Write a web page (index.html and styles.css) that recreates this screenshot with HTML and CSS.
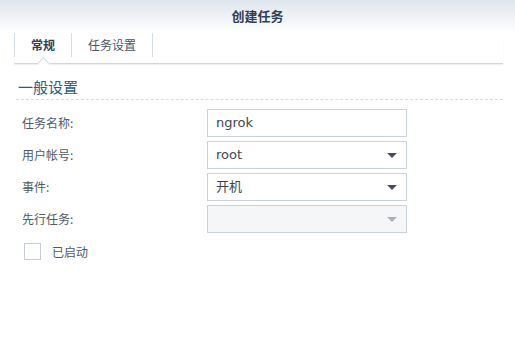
FILE: index.html
```html
<!DOCTYPE html>
<html lang="zh">
<head>
    <meta charset="UTF-8">
    <meta name="viewport" content="width=device-width, initial-scale=1.0">
    <title>创建任务</title>
    <link rel="stylesheet" href="styles.css">
</head>
<body>
    <div class="header">创建任务</div>
    <div class="tabs">
        <div class="tab active">常规</div>
        <div class="tab">任务设置</div>
    </div>
    <div class="content">
        <div class="section-title">一般设置</div>
        <div class="form">
            <label class="label">任务名称:</label>
            <div class="field">ngrok</div>

            <label class="label">用户帐号:</label>
            <div class="field select">root<span class="arrow"></span></div>

            <label class="label">事件:</label>
            <div class="field select">开机<span class="arrow"></span></div>

            <label class="label">先行任务:</label>
            <div class="field select disabled"><span class="arrow"></span></div>
        </div>
        <div class="check-row">
            <span class="checkbox"></span>
            <span class="check-label">已启动</span>
        </div>
    </div>
</body>
</html>
```

FILE: styles.css
```css
* {
    box-sizing: border-box;
}
body {
    margin: 0;
    background-color: #ffffff;
    font-family: "DejaVu Sans", "Noto Sans CJK SC", sans-serif;
    font-size: 12px;
    color: #505a64;
}
.header {
    height: 33px;
    line-height: 32px;
    text-align: center;
    font-size: 13px;
    font-weight: bold;
    color: #2f3f55;
    font-family: "Noto Sans CJK SC", sans-serif;
    background: linear-gradient(to bottom, #dfe5ed, #ffffff);
}
.tabs {
    display: flex;
    margin: 0 12px 0 14px;
    height: 31px;
    border-bottom: 1px solid #d4d8dc;
    box-shadow: 0 1px 1px rgba(0, 0, 0, 0.06);
}
.tab {
    position: relative;
    height: 24px;
    line-height: 24px;
    padding: 0 16px;
    border-right: 1px solid #d5dde6;
    font-family: "Noto Sans CJK SC", sans-serif;
    color: #4a5566;
}
.tab:first-child {
    border-left: 1px solid #d5dde6;
}
.tab.active {
    font-weight: bold;
    color: #2f3f55;
}
.tab.active::after {
    content: "";
    position: absolute;
    left: 50%;
    bottom: -11px;
    width: 8px;
    height: 8px;
    margin-left: -4px;
    background-color: #ffffff;
    border-top: 1px solid #d4d8dc;
    border-left: 1px solid #d4d8dc;
    transform: rotate(45deg);
}
.content {
    padding: 0 12px 0 16px;
}
.section-title {
    margin: 14px 0 0 0;
    padding: 0 0 3px 2px;
    font-size: 15px;
    line-height: 18px;
    color: #2a5a8e;
    font-family: "Noto Sans CJK SC", sans-serif;
    border-bottom: 1px dashed #d2dbe6;
}
.form {
    display: grid;
    grid-template-columns: 185px 200px;
    row-gap: 4px;
    margin-top: 9px;
    padding-left: 6px;
}
.label {
    line-height: 28px;
    font-family: "Noto Sans CJK SC", sans-serif;
    color: #505a64;
}
.field {
    position: relative;
    height: 28px;
    line-height: 26px;
    padding: 0 8px;
    border: 1px solid #c9d2dc;
    font-size: 13px;
    color: #3e4650;
    font-family: "DejaVu Sans", "Noto Sans CJK SC", sans-serif;
}
.field.disabled {
    background-color: #f4f6f8;
}
.arrow {
    position: absolute;
    right: 9px;
    top: 11px;
    width: 0;
    height: 0;
    border-left: 5px solid transparent;
    border-right: 5px solid transparent;
    border-top: 5px solid #47505c;
}
.disabled .arrow {
    border-top-color: #a9b0b8;
}
.check-row {
    display: flex;
    align-items: center;
    margin-top: 10px;
    padding-left: 8px;
}
.checkbox {
    width: 17px;
    height: 17px;
    border: 1px solid #c4cdd7;
    background-color: #ffffff;
}
.check-label {
    margin-left: 11px;
    font-family: "Noto Sans CJK SC", sans-serif;
    color: #505a64;
}
```
